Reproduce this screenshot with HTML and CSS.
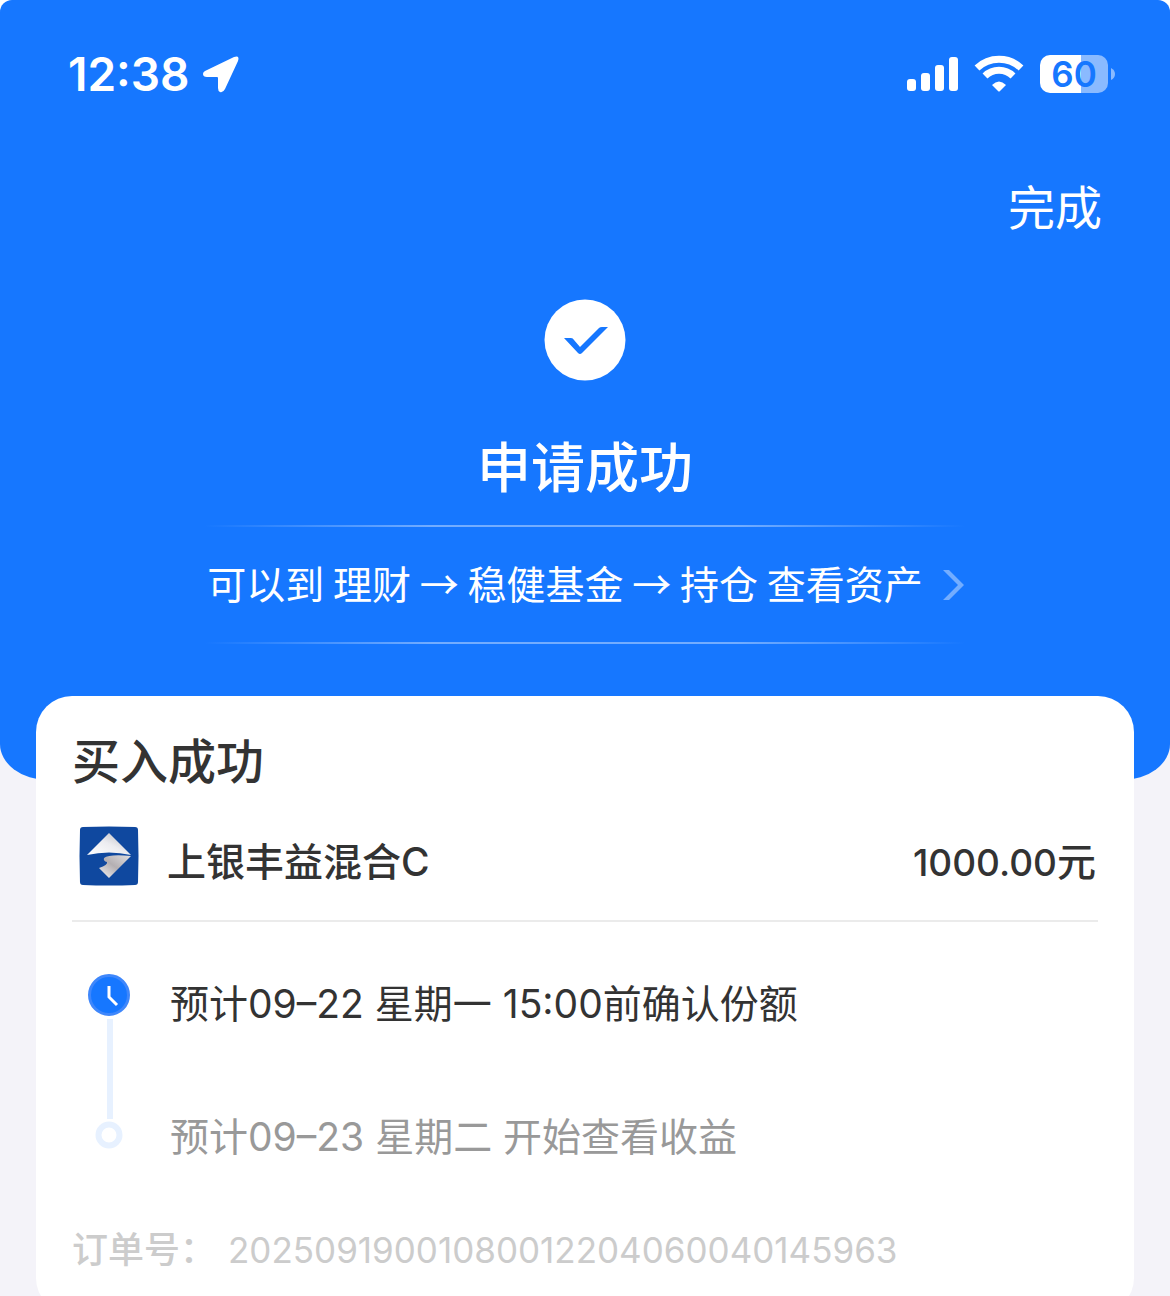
FILE: index.html
```html
<!DOCTYPE html>
<html lang="zh-CN">
<head>
    <meta charset="UTF-8">
    <meta name="viewport" content="width=device-width, initial-scale=1.0">
    <title>申请成功</title>
    <link rel="stylesheet" href="styles.css">
</head>
<body>
    <div class="page">
        <header class="hero">
            <div class="status-bar">
                <div class="status-left">
                    <span class="time">12:38</span>
                    <svg class="location" width="38" height="38" viewBox="0 0 38 38" aria-hidden="true">
                        <path d="M3 16 L32 2 Q38 0 36 6 L23 34 Q21 38 18 37 Q16 36 16 33 V23 Q16 22 15 22 H5 Q1 22 1 19 Q1 17 3 16 Z" fill="#fff"/>
                    </svg>
                </div>
                <div class="status-right">
                    <svg width="52" height="36" viewBox="0 0 52 36" aria-hidden="true">
                        <g fill="#fff">
                            <rect x="1" y="23" width="9" height="12" rx="3"/>
                            <rect x="15" y="17" width="9" height="18" rx="3"/>
                            <rect x="29" y="9" width="9" height="26" rx="3"/>
                            <rect x="43" y="1" width="9" height="34" rx="3"/>
                        </g>
                    </svg>
                    <svg width="50" height="38" viewBox="0 0 50 38" aria-hidden="true">
                        <g fill="none" stroke="#fff" stroke-width="7">
                            <path d="M3 13 A32 32 0 0 1 47 13"/>
                            <path d="M11 21 A20 20 0 0 1 39 21"/>
                        </g>
                        <path d="M18 30 Q25 23 32 30 L26 36 Q25 37 24 36 Z" fill="#fff"/>
                    </svg>
                    <div class="battery">
                        <span class="battery-level">60</span>
                        <svg width="4" height="12" viewBox="0 0 4 12" aria-hidden="true">
                            <path d="M0 0 Q4 2 4 6 T0 12 Z" fill="#8abaff"/>
                        </svg>
                    </div>
                </div>
            </div>

            <nav class="nav">
                <button class="done" type="button">完成</button>
            </nav>

            <div class="result">
                <svg class="result-icon" width="82" height="82" viewBox="0 0 82 82" aria-hidden="true">
                    <circle cx="41" cy="41" r="40.5" fill="#fff"/>
                    <path d="M20 39 H27 Q29 39 30 41 L36 48 L55 29 Q56 28 58 28 H64 L38 54 Q36 56 34 54 Z" fill="#1677ff"/>
                </svg>
                <h1>申请成功</h1>
                <a class="notice" href="#">
                    <span>可以到 理财 → 稳健基金 → 持仓 查看资产</span>
                    <svg width="22" height="32" viewBox="0 0 22 32" aria-hidden="true">
                        <path d="M0 1 H6 L21 16 L6 31 H0 L15 16 Z" fill="#73adff"/>
                    </svg>
                </a>
            </div>
        </header>

        <main class="card">
            <h2>买入成功</h2>

            <div class="fund">
                <svg class="fund-logo" width="60" height="60" viewBox="0 0 60 60" aria-hidden="true">
                    <defs>
                        <linearGradient id="silver-top" x1="0" y1="1" x2="1" y2="0">
                            <stop offset="0" stop-color="#fff"/>
                            <stop offset="0.5" stop-color="#ececf0"/>
                            <stop offset="1" stop-color="#b4b4ba"/>
                        </linearGradient>
                        <linearGradient id="silver-bottom" x1="0" y1="1" x2="1" y2="0">
                            <stop offset="0" stop-color="#f4f4f6"/>
                            <stop offset="0.5" stop-color="#b4afb2"/>
                            <stop offset="1" stop-color="#e0dfe2"/>
                        </linearGradient>
                    </defs>
                    <path d="M4 1 Q30 0 56 1 Q59 1 59 4 Q60 30 59 56 Q59 59 56 59 Q30 60 4 59 Q1 59 1 56 Q0 30 1 4 Q1 1 4 1 Z" fill="#0f489f"/>
                    <path d="M30 7 L52 29 Q30 24 8 29 Z" fill="url(#silver-top)"/>
                    <path d="M52 30 L30 52 L20 42 Q29 39 28 36 Q24 35 25 32 Q30 28 52 30 Z" fill="url(#silver-bottom)"/>
                </svg>
                <span class="fund-name">上银丰益混合C</span>
                <span class="fund-amount"><span class="number">1000.00</span>元</span>
            </div>

            <ol class="timeline">
                <li class="step active">
                    <svg class="step-icon" width="44" height="44" viewBox="0 0 44 44" aria-hidden="true">
                        <circle cx="22" cy="22" r="19.5" fill="#1677ff" stroke="#3f87fb" stroke-width="3"/>
                        <path d="M22 13 V24 L30 32" fill="none" stroke="#fff" stroke-width="3"/>
                    </svg>
                    <span>预计09–22 星期一 15:00前确认份额</span>
                </li>
                <li class="step">
                    <svg class="step-icon" width="28" height="28" viewBox="0 0 28 28" aria-hidden="true">
                        <circle cx="14" cy="14" r="10.5" fill="#fff" stroke="#e7f1ff" stroke-width="6"/>
                    </svg>
                    <span>预计09–23 星期二 开始查看收益</span>
                </li>
            </ol>

            <p class="order">
                <span>订单号：</span>
                <span class="order-number">20250919001080012204060040145963</span>
            </p>
        </main>
    </div>
</body>
</html>
```

FILE: styles.css
```css
* {
    box-sizing: border-box;
}

body {
    margin: 0;
    background-color: #fff;
    color: #333;
    font-family: Inter, "Noto Sans CJK SC", sans-serif;
}

h1, h2, p, ol {
    margin: 0;
    padding: 0;
}

svg {
    display: block;
    flex-shrink: 0;
}

.page {
    height: 100vh;
    overflow-x: hidden;
    overflow-y: auto;
    scrollbar-width: none;
    background-color: #f4f3f9;
    border-radius: 12px 12px 0 0;
}

/* Blue header */
.hero {
    padding-bottom: 136px;
    background-color: #1677ff;
    color: #fff;
    border-radius: 0 0 48px 48px / 0 0 36px 36px;
}

.status-bar {
    display: flex;
    justify-content: space-between;
    align-items: center;
    height: 148px;
    padding: 0 55px 0 68px;
}

.status-left {
    display: flex;
    align-items: center;
    gap: 12px;
}

.time {
    font-size: 46px;
    font-weight: 600;
    line-height: 56px;
}

.status-right {
    display: flex;
    align-items: center;
    gap: 16px;
}

.battery {
    display: flex;
    align-items: center;
    gap: 3px;
}

.battery-level {
    width: 68px;
    height: 38px;
    border-radius: 10px;
    background: linear-gradient(to right, #fff 60%, #8abaff 60%);
    color: #1677ff;
    font-size: 35px;
    font-weight: 600;
    line-height: 38px;
    text-align: center;
}

.nav {
    display: flex;
    justify-content: flex-end;
    padding: 26px 68px 0;
}

.done {
    padding: 0;
    border: none;
    background: none;
    color: #fff;
    font-family: inherit;
    font-size: 47px;
    line-height: 68px;
    cursor: pointer;
}

.result {
    display: flex;
    flex-direction: column;
    align-items: center;
    padding-top: 57px;
}

.result h1 {
    margin: 50px 0 18px;
    font-size: 54px;
    font-weight: 500;
    line-height: 76px;
}

.notice {
    display: flex;
    align-items: center;
    gap: 20px;
    height: 119px;
    padding-left: 2px;
    background:
        linear-gradient(to right, transparent, #73adff 30%, #73adff 70%, transparent) top / 100% 2px no-repeat,
        linear-gradient(to right, transparent, #73adff 30%, #73adff 70%, transparent) bottom / 100% 2px no-repeat;
    color: #fff;
    font-family: "Noto Sans CJK SC", sans-serif;
    font-size: 39px;
    text-decoration: none;
}

.notice span {
    padding-bottom: 6px;
}

/* Order card */
.card {
    position: relative;
    margin: -84px 36px 0;
    padding: 30px 36px 37px;
    background-color: #fff;
    border-radius: 36px;
}

.card h2 {
    font-size: 48px;
    font-weight: 500;
    line-height: 72px;
}

.fund {
    display: flex;
    align-items: center;
    height: 124px;
    padding: 0 2px 0 7px;
    border-bottom: 2px solid #ebebeb;
    font-size: 39px;
    font-weight: 500;
}

.fund-logo {
    margin-bottom: 6px;
}

.fund-name {
    margin-left: 28px;
}

.fund-amount {
    margin-left: auto;
}

.number {
    font-size: 37px;
}

/* Timeline */
.timeline {
    position: relative;
    padding-top: 49px;
    list-style: none;
}

.timeline::before {
    content: "";
    position: absolute;
    top: 97px;
    left: 35px;
    width: 6px;
    height: 100px;
    background-color: #e7f1ff;
}

.step {
    display: grid;
    grid-template-columns: 74px 1fr;
    column-gap: 24px;
    color: #999;
    font-size: 39px;
    line-height: 66px;
}

.step.active {
    height: 133px;
    color: #333;
}

.step-icon {
    justify-self: center;
    margin-top: 17px;
}

.active .step-icon {
    margin-top: 2px;
}

.order {
    display: flex;
    gap: 12px;
    margin-top: 53px;
    color: #ccc;
    font-size: 36px;
    font-weight: 500;
    line-height: 54px;
}

.order-number {
    font-size: 35px;
    font-weight: 400;
}
```
